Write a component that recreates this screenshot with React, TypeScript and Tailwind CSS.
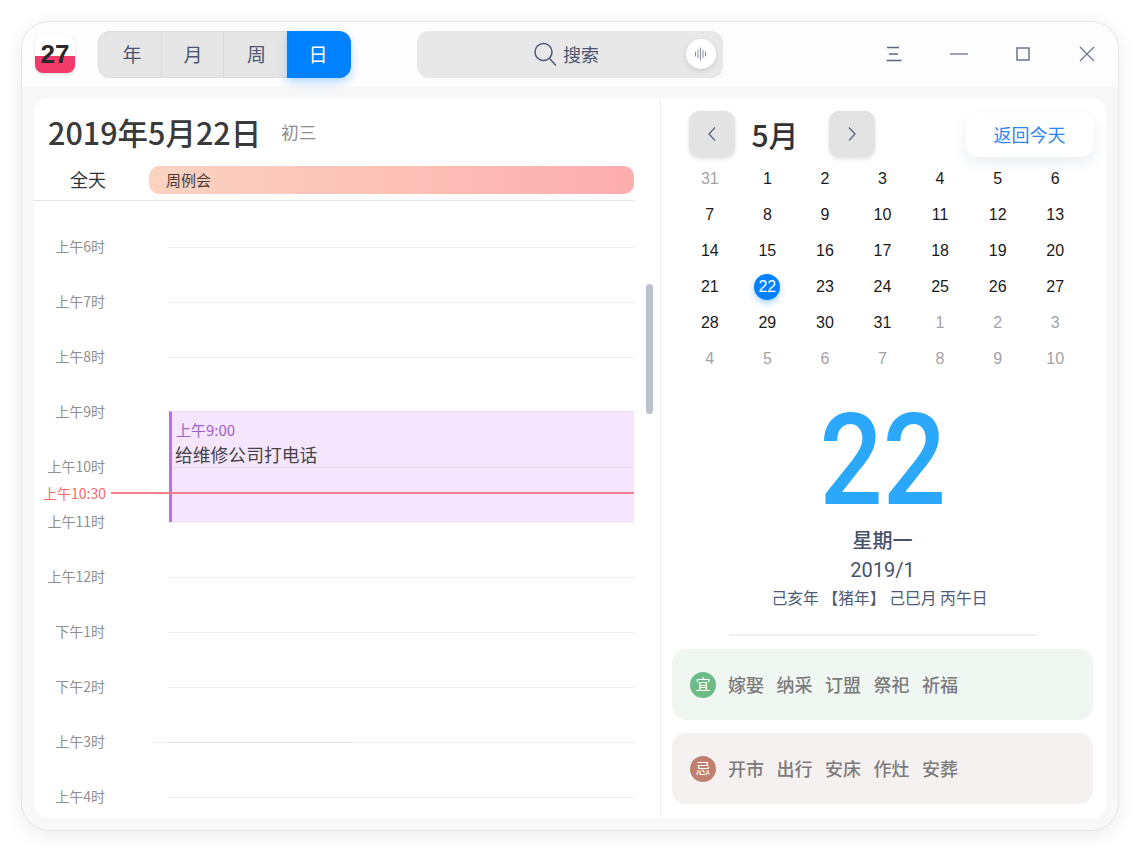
const hours = ["上午6时", "上午7时", "上午8时", "上午9时", "上午10时", "上午11时", "上午12时", "下午1时", "下午2时", "上午3时", "上午4时"];

const weeks = [
  ["31", "1", "2", "3", "4", "5", "6"],
  ["7", "8", "9", "10", "11", "12", "13"],
  ["14", "15", "16", "17", "18", "19", "20"],
  ["21", "22", "23", "24", "25", "26", "27"],
  ["28", "29", "30", "31", "1", "2", "3"],
  ["4", "5", "6", "7", "8", "9", "10"],
];

function isMuted(row: number, col: number) {
  return (row === 0 && col === 0) || (row === 4 && col > 3) || row === 5;
}

function TitleBar() {
  return (
    <div className="h-[64px] shrink-0 flex items-center bg-[#fdfdfe] pl-[13px]">
      <div className="relative w-[40px] h-[37px] rounded-[8px] shadow-[0_1px_3px_rgba(0,0,0,0.15)] bg-[linear-gradient(180deg,#ffffff_0%,#ffffff_54%,#f23b6b_54%,#f23b6b_100%)] flex items-center justify-center">
        <span className="font-['Liberation_Sans',sans-serif] font-bold text-[26px] leading-none text-[#2a2a2a]">27</span>
      </div>
      <div className="ml-[23px] flex h-[47px] w-[253px] rounded-[12px] bg-[#e6e6e6] shadow-[inset_0_0_2px_rgba(0,0,0,0.12)] text-[19px] text-[#4b5573]">
        <div className="w-[64px] pl-[5px] flex items-center justify-center border-r border-[#dcdcdc]">年</div>
        <div className="w-[62px] pl-[1px] flex items-center justify-center border-r border-[#dcdcdc]">月</div>
        <div className="w-[63px] pl-[2px] flex items-center justify-center">周</div>
        <div className="w-[64px] pr-[2px] flex items-center justify-center rounded-[12px] rounded-l-none bg-[#0081ff] text-white shadow-[0_4px_10px_rgba(0,129,255,0.3)]">日</div>
      </div>
      <div className="ml-[66px] relative flex h-[47px] w-[306px] items-center justify-center rounded-[12px] bg-[#e8e8e8] text-[18px] text-[#4b5573]">
        <div className="flex items-center gap-[6px] mr-[8px]">
          <svg width="24" height="26" viewBox="0 0 24 26" fill="none" stroke="#4f5a75" strokeWidth="1.5" strokeLinecap="round">
            <circle cx="10.5" cy="11" r="8.5" />
            <path d="M16.5 17.5 L22.5 24" />
          </svg>
          <span>搜索</span>
        </div>
        <div className="absolute right-[7px] top-[8px] w-[30px] h-[30px] rounded-full bg-white shadow-[0_2px_5px_rgba(0,0,0,0.12)] flex items-center justify-center">
          <svg width="14" height="14" viewBox="0 0 14 14" stroke="#8a8f9c" strokeWidth="1" strokeLinecap="round">
            <path d="M1.5 5v4M4 3v8M6.5 1v12M9 3.5v7M11.500 5v4" />
          </svg>
        </div>
      </div>
      <svg className="ml-[163px]" width="16" height="16" viewBox="0 0 16 16" stroke="#5c6680" strokeWidth="1.3">
        <path d="M1 1.500h12M3 8h9M0.500 14.500h15" />
      </svg>
      <svg className="ml-[48px]" width="18" height="4" viewBox="0 0 18 4" stroke="#7c8598" strokeWidth="1.500">
        <path d="M0 2h18" />
      </svg>
      <svg className="ml-[48px]" width="14" height="14" viewBox="0 0 14 14" fill="none" stroke="#6b7489" strokeWidth="1.500">
        <rect x="1" y="1" width="12" height="12" />
      </svg>
      <svg className="ml-[49px]" width="16" height="16" viewBox="0 0 16 16" stroke="#6b7489" strokeWidth="1.200">
        <path d="M1 1l14 14M15 1L1 15" />
      </svg>
    </div>
  );
}

function DayPane() {
  return (
    <div className="relative w-[627px] shrink-0 overflow-hidden border-r border-[#eeeeee]">
      <div className="h-[68px] flex items-center pl-[14px]">
        <span className="text-[30.5px] font-medium leading-none text-[#3a3a3a]">2019年5月22日</span>
        <span className="ml-[20px] text-[17.5px] text-[#8c8c8c]">初三</span>
      </div>
      <div className="mr-[26px] h-[35px] flex items-start border-b border-[#e4e4e4]">
        <div className="w-[115px] pr-[7px] pb-[2px] h-[28px] flex items-center justify-center text-[18px] text-[#333]">全天</div>
        <div className="w-[485px] h-[28px] rounded-[10px] bg-[linear-gradient(90deg,#fbd3c0_0%,#fdaeae_100%)] flex items-center pl-[17px] text-[15px] text-[#4a3a36]">
          周例会
        </div>
      </div>
      <div className="pt-[19px]">
        {hours.map((label) => (
          <div key={label} className="relative h-[55px] flex items-center">
            <span className="w-[71px] pb-[2px] text-right text-[14px] text-[#8f8f8f]">{label}</span>
            <div className="ml-[63px] w-[466px] h-px bg-[#eeeeee]" />
            {label === "上午3时" && (
              <div className="absolute left-[118px] top-[27px] w-[200px] h-px bg-[linear-gradient(90deg,#eeeeee_0%,#eeeeee_8%,#dfdfdf_8%,#dfdfdf_100%)]" />
            )}
          </div>
        ))}
      </div>
      <div className="absolute left-[135px] top-[313px] w-[465px] h-[111px] bg-[#f5e6fd] border-l-[3px] border-[#bf6cf5] border-t border-t-[#e9d9f3]">
        <div className="absolute left-0 right-0 top-[55px] h-px bg-[#e9d9f3]" />
        <div className="pl-[4px] pt-[7px] text-[15px] leading-[22px] text-[#9d62c9]">上午9:00</div>
        <div className="pl-[3px] text-[17.800px] leading-[26px] text-[#454248]">给维修公司打电话</div>
      </div>
      <div className="absolute left-[9px] top-[384px] flex items-center w-[591px] h-[22px]">
        <span className="text-[14px] text-[#f86a6a]">上午10:30</span>
        <div className="ml-[5px] flex-1 h-[2px] bg-[#f47c8c]" />
      </div>
      <div className="absolute left-[612px] top-[186px] w-[7px] h-[130px] rounded-full bg-[#bcc2cc]" />
    </div>
  );
}

function MiniCalendar() {
  return (
    <>
      <div className="flex items-center h-[46px] pl-[28px]">
        <div className="w-[46px] h-[46px] rounded-[10px] bg-[#e3e3e3] shadow-[0_2px_4px_rgba(0,0,0,0.12)] flex items-center justify-center">
          <svg width="10" height="16" viewBox="0 0 10 16" fill="none" stroke="#5b6780" strokeWidth="1.300"><path d="M8 1.500 L2 8 L8 14.500" /></svg>
        </div>
        <span className="w-[94px] pr-[14px] text-center text-[30px] font-medium leading-none text-[#333]">5月</span>
        <div className="w-[46px] h-[46px] rounded-[10px] bg-[#e3e3e3] shadow-[0_2px_4px_rgba(0,0,0,0.12)] flex items-center justify-center">
          <svg width="10" height="16" viewBox="0 0 10 16" fill="none" stroke="#5b6780" strokeWidth="1.300"><path d="M2 1.500 L8 8 L2 14.500" /></svg>
        </div>
        <div className="ml-[91px] w-[127px] h-[44px] mt-[1px] rounded-[12px] bg-white shadow-[0_6px_14px_rgba(60,90,140,0.1)] flex items-center justify-center text-[18px] text-[#2a86f0]">
          返回今天
        </div>
      </div>
      <div className="mt-[4px] pl-[20px] pr-[22px] grid grid-cols-7 font-['Liberation_Sans',sans-serif] text-[16px]">
        {weeks.map((week, row) =>
          week.map((day, col) => (
            <div key={`${row}-${col}`} className="h-[36px] flex items-center justify-center">
              {row === 3 && col === 1 ? (
                <span className="w-[26px] h-[26px] rounded-full bg-[#0081ff] text-white flex items-center justify-center shadow-[0_3px_6px_rgba(0,129,255,0.35)]">{day}</span>
              ) : (
                <span className={isMuted(row, col) ? "text-[#a3a3a3]" : "text-[#1a1a1a]"}>{day}</span>
              )}
            </div>
          ))
        )}
      </div>
    </>
  );
}

function AlmanacRow({ badge, badgeColor, bg, items }: { badge: string; badgeColor: string; bg: string; items: string[] }) {
  return (
    <div className={`h-[71px] rounded-[14px] flex items-center pl-[18px] ${bg}`}>
      <span className={`w-[26px] h-[26px] rounded-full text-white text-[15px] flex items-center justify-center ${badgeColor}`}>{badge}</span>
      <div className="ml-[12px] flex gap-[12.500px] text-[18px] font-medium text-[#7b7b7b]">
        {items.map((item) => (
          <span key={item}>{item}</span>
        ))}
      </div>
    </div>
  );
}

function DetailPane() {
  return (
    <div className="flex-1 pt-[13px]">
      <MiniCalendar />
      <div className="mt-[28px] pr-[2px] flex flex-col items-center">
        <div className="h-[110px] font-['Roboto',sans-serif] font-medium text-[128px] leading-[110px] text-[#2ca8fb] scale-x-[0.87]">22</div>
        <div className="mt-[11px] text-[20px] leading-[28px] font-medium text-[#47526d]">星期一</div>
        <div className="mt-[2px] font-['Roboto',sans-serif] text-[20px] leading-[28px] text-[#47526d]">2019/1</div>
        <div className="pr-[6px] text-[15.800px] leading-[28px] text-[#4f5b76]">己亥年 【猪年】 己巳月 丙午日</div>
        <div className="mt-[22px] w-[308px] h-[2px] bg-[#f0f0f0]" />
      </div>
      <div className="mt-[13px] pl-[11px] pr-[13px] flex flex-col gap-[13px]">
        <AlmanacRow badge="宜" badgeColor="bg-[#6dbb85]" bg="bg-[#f0f6f2]" items={["嫁娶", "纳采", "订盟", "祭祀", "祈福"]} />
        <AlmanacRow badge="忌" badgeColor="bg-[#c17f6f]" bg="bg-[#f6f1f1]" items={["开市", "出行", "安床", "作灶", "安葬"]} />
      </div>
    </div>
  );
}

export default function App() {
  return (
    <div className="w-[1140px] h-[852px] overflow-hidden bg-white pt-[21px] pl-[21px] font-['Noto_Sans_CJK_SC','Noto_Sans',sans-serif]">
      <div className="w-[1098px] h-[810px] rounded-[28px] overflow-hidden flex flex-col bg-[#f8f8f8] border border-[#e6e6e6] shadow-[0_4px_20px_rgba(0,0,0,0.08)]">
        <TitleBar />
        <div className="mx-[12px] mt-[12px] flex h-[720px] rounded-[14px] bg-white overflow-hidden">
          <DayPane />
          <DetailPane />
        </div>
      </div>
    </div>
  );
}
